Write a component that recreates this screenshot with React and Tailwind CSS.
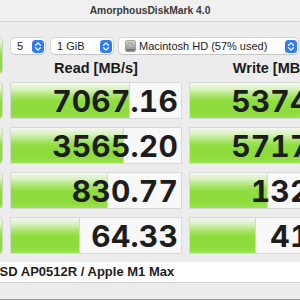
import React from 'react';

const rows = [
  { read: '7067.16', readW: 119, write: '5374.41', writeW: 116 },
  { read: '3565.20', readW: 113, write: '5717.57', writeW: 117 },
  { read: '830.77', readW: 97, write: '132.06', writeW: 78 },
  { read: '64.33', readW: 69, write: '41.68', writeW: 66 },
];

const green =
  'bg-[linear-gradient(180deg,#f4f6f1_0%,#d7f1bd_18%,#a9e56e_36%,#8fdd3e_52%,#8ddc3b_84%,#9be355_100%)]';

function Stepper() {
  return (
    <div className="flex h-[13px] w-[12px] items-center justify-center rounded-[3.5px] bg-[#2f7cf6]">
      <svg width="12" height="13" viewBox="0 0 12 13" fill="none">
        <path d="M3.6 5.2 L6 2.9 L8.4 5.2" stroke="white" strokeWidth="1.3" strokeLinecap="round" strokeLinejoin="round" />
        <path d="M3.6 7.8 L6 10.1 L8.4 7.8" stroke="white" strokeWidth="1.3" strokeLinecap="round" strokeLinejoin="round" />
      </svg>
    </div>
  );
}

function DriveIcon() {
  return (
    <svg width="11" height="12" viewBox="0 0 11 12" className="mr-[3px]">
      <defs>
        <linearGradient id="hd" x1="0" y1="0" x2="0" y2="1">
          <stop offset="0" stopColor="#d9d9d9" />
          <stop offset="1" stopColor="#8d8d8d" />
        </linearGradient>
      </defs>
      <rect x="0.5" y="0.5" width="10" height="11" rx="1.5" fill="url(#hd)" stroke="#7a7a7a" strokeWidth="0.6" />
      <ellipse cx="5.5" cy="5" rx="3" ry="2.6" fill="#b9b9b9" stroke="#8a8a8a" strokeWidth="0.5" />
      <rect x="1.5" y="9" width="8" height="1.6" rx="0.5" fill="#6e6e6e" />
    </svg>
  );
}

function Select({ className, children }) {
  return (
    <div
      className={`flex h-[16px] items-center justify-between rounded-[4px] bg-white pl-[6px] pr-[1.5px] text-[11px] text-[#222] shadow-[0_0_0_0.5px_rgba(0,0,0,0.2),0_1px_1px_rgba(0,0,0,0.08)] ${className}`}
    >
      <div className="flex items-center">{children}</div>
      <Stepper />
    </div>
  );
}

function Bar({ value, width }) {
  return (
    <div className="relative h-[37px] w-[172px] overflow-hidden border border-[#d8d8d8] bg-[#f8f8f8]">
      <div className={`absolute inset-y-0 left-0 border-r border-[#d4d8cf] ${green}`} style={{ width }} />
      <div className="relative flex h-full items-center justify-end pr-[3px] font-['Inter',sans-serif] text-[30px] font-bold leading-none tracking-[0.2px] text-[#1d1d1d] tabular-nums">
        {value}
      </div>
    </div>
  );
}

export default function App() {
  return (
    <div className="h-[300px] w-[300px] overflow-hidden border-b border-[#9a9a9a] bg-[#ececec] font-['Liberation_Sans',Arial,sans-serif]">
      <div className="flex h-[22px] items-center justify-center border-b border-[#d2d2d2] bg-[#f0f0f0] text-[10.3px] font-bold text-[#3a3a3a]">
        AmorphousDiskMark 4.0
      </div>

      <div className="ml-[-67px] flex w-[440px] flex-col pt-[15px]">
        <div className="flex gap-[7px]">
          <div className={`h-[37px] w-[70px] shrink-0 rounded-[4px] border border-[#c9d6bd] ${green}`} />
          <div className="flex flex-col">
            <div className="mt-[1px] flex gap-[6px] pl-[1px]">
              <Select className="w-[34px]">5</Select>
              <Select className="w-[62px]">1 GiB</Select>
              <Select className="w-[179px]">
                <DriveIcon />
                Macintosh HD (57% used)
              </Select>
            </div>
            <div className="mt-[4px] grid h-[18px] grid-cols-[172px_172px] gap-[7px] text-[14.5px] font-bold text-[#1a1a1a]">
              <div className="flex items-center justify-center">Read [MB/s]</div>
              <div className="flex items-center justify-center">Write [MB/s]</div>
            </div>
          </div>
        </div>

        <div className="mt-[6px] flex flex-col gap-[8px]">
          {rows.map((r) => (
            <div key={r.read} className="flex gap-[7px]">
              <div className={`h-[37px] w-[70px] shrink-0 rounded-[4px] border border-[#c9d6bd] ${green}`} />
              <Bar value={r.read} width={r.readW} />
              <Bar value={r.write} width={r.writeW} />
            </div>
          ))}
        </div>

        <div className="mt-[8px] flex h-[21px] items-center border-b border-[#d0d0d0] bg-white pl-[11px] text-[13px] font-bold text-[#1e1e1e]">
          APPLE SSD AP0512R / Apple M1 Max
        </div>
      </div>
    </div>
  );
}
